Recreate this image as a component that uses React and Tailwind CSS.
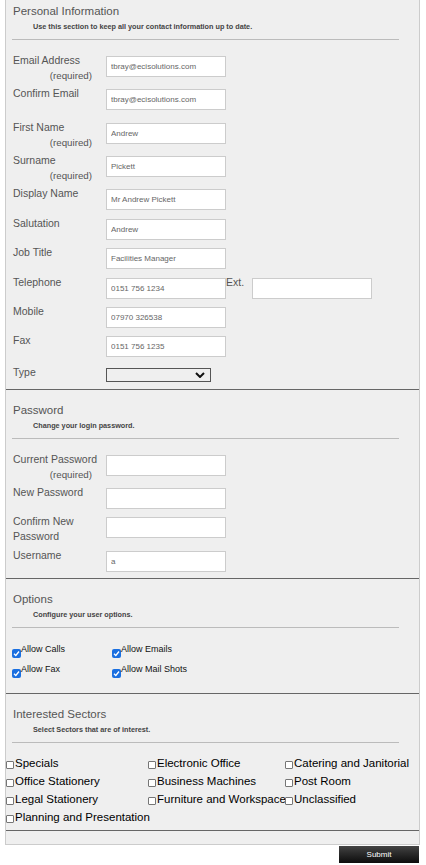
import React from 'react';

function SectionHead({ title, note, first }) {
  return (
    <div className={first ? 'pt-[4px]' : 'pt-[13px]'}>
      <div className="pl-[7px] h-[14px] leading-[14px] text-[11.5px] text-[#555]">{title}</div>
      <div className="pl-[27px] mt-[4px] h-[10px] leading-[10px] text-[7.25px] font-bold text-[#444]">{note}</div>
      <div className="ml-[6px] mt-[7px] w-[387px] h-px bg-[#bbb]" />
    </div>
  );
}

function TextBox({ value = '' }) {
  return (
    <input
      readOnly
      value={value}
      className="w-[120px] h-[21px] bg-white border border-[#ccc] px-[4px] text-[8px] text-[#666] outline-none"
    />
  );
}

function Row({ label, required, height, children }) {
  return (
    <div className={`flex pl-[7px] ${height}`}>
      <div className="w-[93px] text-[10.5px] leading-[15px] text-[#555]">
        <div>{label}</div>
        {required && <div className="text-right pr-[14px] text-[9.75px]">(required)</div>}
      </div>
      <div className="mt-[3px] flex items-start">{children}</div>
    </div>
  );
}

function BlueCheck({ label }) {
  return (
    <div className="flex items-start h-[20px]">
      <span className="mt-[10px] w-[9px] h-[9px] rounded-[2px] bg-[#1a6fe0] flex items-center justify-center">
        <svg width="7" height="7" viewBox="0 0 7 7">
          <path d="M1 3.8 L2.8 5.5 L6 1.5" fill="none" stroke="white" strokeWidth="1.3" />
        </svg>
      </span>
      <span className="leading-[20px] text-[9px] text-[#111]">{label}</span>
    </div>
  );
}

function SectorCheck({ label }) {
  return (
    <div className="flex items-center whitespace-nowrap">
      <span className="mt-[2px] w-[8px] h-[8px] shrink-0 border border-[#767676] rounded-[1px] bg-white" />
      <span className="ml-[1px] text-[11.5px] text-[#000]">{label}</span>
    </div>
  );
}

const sectors = [
  'Specials', 'Electronic Office', 'Catering and Janitorial',
  'Office Stationery', 'Business Machines', 'Post Room',
  'Legal Stationery', 'Furniture and Workspace', 'Unclassified',
  'Planning and Presentation',
];

export default function App() {
  return (
    <div className="pl-[5px] bg-white min-h-screen font-['Liberation_Sans',Arial,sans-serif]">
      <div className="w-[415px] bg-[#efefef] border-x border-b border-[#ccc]">
        {/* personal */}
        <div className="border-b border-[#666] pb-[7px]">
          <SectionHead first title="Personal Information" note="Use this section to keep all your contact information up to date." />
          <div className="mt-[13px]">
            <Row label="Email Address" required height="h-[33px]"><TextBox value="tbray@ecisolutions.com" /></Row>
            <Row label="Confirm Email" height="h-[34px]"><TextBox value="tbray@ecisolutions.com" /></Row>
            <Row label="First Name" required height="h-[33px]"><TextBox value="Andrew" /></Row>
            <Row label="Surname" required height="h-[33px]"><TextBox value="Pickett" /></Row>
            <Row label="Display Name" height="h-[30px]"><TextBox value="Mr Andrew Pickett" /></Row>
            <Row label="Salutation" height="h-[29px]"><TextBox value="Andrew" /></Row>
            <Row label="Job Title" height="h-[30px]"><TextBox value="Facilities Manager" /></Row>
            <Row label="Telephone" height="h-[29px]">
              <TextBox value="0151 756 1234" />
              <span className="-mt-[3px] w-[26px] text-[10.5px] leading-[15px] text-[#555]">Ext.</span>
              <TextBox />
            </Row>
            <Row label="Mobile" height="h-[29px]"><TextBox value="07970 326538" /></Row>
            <Row label="Fax" height="h-[32px]"><TextBox value="0151 756 1235" /></Row>
            <Row label="Type" height="h-[17px]">
              <div className="w-[105px] h-[14px] border border-[#555] flex items-center justify-end pr-[5px]">
                <svg width="10" height="6" viewBox="0 0 10 6">
                  <path d="M1 1 L5 5 L9 1" fill="none" stroke="#111" strokeWidth="2" />
                </svg>
              </div>
            </Row>
          </div>
        </div>

        {/* password */}
        <div className="border-b border-[#666] pb-[6px]">
          <SectionHead title="Password" note="Change your login password." />
          <div className="mt-[13px]">
            <Row label="Current Password" required height="h-[33px]"><TextBox /></Row>
            <Row label="New Password" height="h-[29px]"><TextBox /></Row>
            <Row label="Confirm New Password" height="h-[34px]"><TextBox /></Row>
            <Row label="Username" height="h-[24px]"><TextBox value="a" /></Row>
          </div>
        </div>

        {/* options */}
        <div className="border-b border-[#666] pb-[14px]">
          <SectionHead title="Options" note="Configure your user options." />
          <div className="mt-[11px] pl-[6px] grid grid-cols-[100px_1fr]">
            <BlueCheck label="Allow Calls" />
            <BlueCheck label="Allow Emails" />
            <BlueCheck label="Allow Fax" />
            <BlueCheck label="Allow Mail Shots" />
          </div>
        </div>

        {/* sectors */}
        <div className="border-b border-[#666] pb-[3px]">
          <SectionHead title="Interested Sectors" note="Select Sectors that are of interest." />
          <div className="mt-[11px] grid grid-cols-[142px_137px_1fr] grid-rows-[19px_18px_18px_18px]">
            {sectors.map((s) => (
              <SectorCheck key={s} label={s} />
            ))}
          </div>
        </div>
        <div className="h-[13px]" />
      </div>

      <div className="w-[415px] flex justify-end mt-[1px]">
        <button className="mr-[1px] w-[80px] h-[17px] bg-gradient-to-b from-[#444] to-[#0d0d0d] text-white text-[8px] leading-[17px]">
          Submit
        </button>
      </div>
    </div>
  );
}
